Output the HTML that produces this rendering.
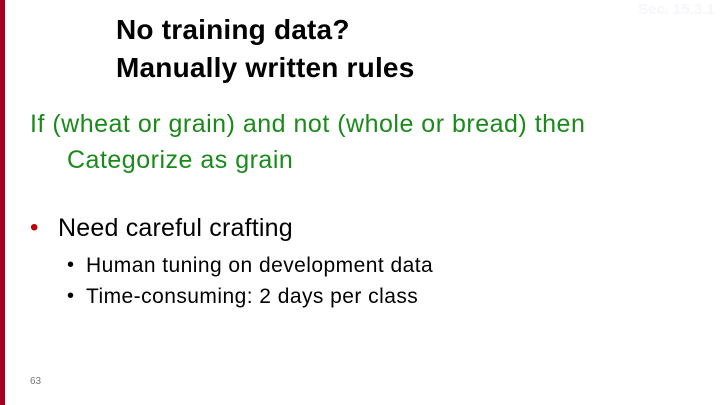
<html><head><style>
body{margin:0;width:720px;height:405px;background:#fff;position:relative;overflow:hidden;font-family:"Liberation Sans",sans-serif}
.bar{position:absolute;left:0;top:0;width:5px;height:405px;background:#a50021}
div.t{position:absolute;white-space:nowrap;line-height:1}
</style></head><body>
<div class="bar"></div>
<div class="t" style="left:638px;top:2px;font-size:15px;font-weight:bold;color:#f6f6fb">Sec. 15.3.1</div>
<div class="t" style="left:116px;top:16px;font-size:28px;font-weight:bold;color:#000;letter-spacing:0.2px">No training data?</div>
<div class="t" style="left:116px;top:54px;font-size:28px;font-weight:bold;color:#000;letter-spacing:0.2px">Manually written rules</div>
<div class="t" style="left:30px;top:112px;font-size:25px;color:#1a8a1a;letter-spacing:0.5px">If (wheat or grain) and not (whole or bread) then</div>
<div class="t" style="left:67px;top:148px;font-size:25px;color:#1a8a1a;letter-spacing:0.5px">Categorize as grain</div>
<div class="t" style="left:30px;top:216px;font-size:24px;color:#c00000">•</div>
<div class="t" style="left:58px;top:216px;font-size:25px;color:#000;letter-spacing:0.2px">Need careful crafting</div>
<div class="t" style="left:67px;top:255px;font-size:20px;color:#000">•</div>
<div class="t" style="left:86px;top:255px;font-size:21px;color:#000;letter-spacing:0.45px">Human tuning on development data</div>
<div class="t" style="left:67px;top:286px;font-size:20px;color:#000">•</div>
<div class="t" style="left:86px;top:286px;font-size:21px;color:#000;letter-spacing:0.45px">Time-consuming: 2 days per class</div>
<div class="t" style="left:30px;top:377px;font-size:10px;color:#777">63</div>
</body></html>
